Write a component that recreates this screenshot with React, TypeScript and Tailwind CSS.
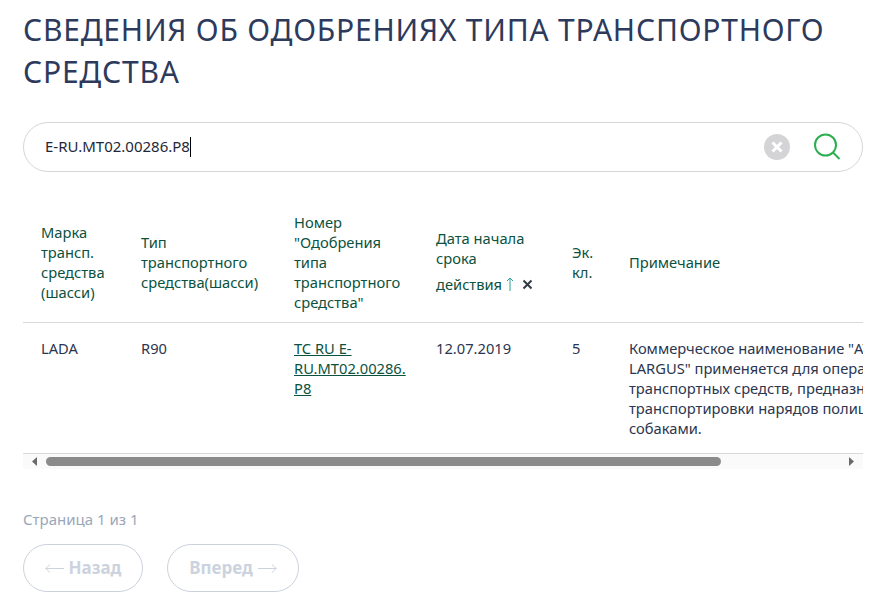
const font = "font-['Noto_Sans','Open_Sans',sans-serif]";

function Th({ children, className = "" }: { children: React.ReactNode; className?: string }) {
  return <th className={"pl-[18px] pr-2 py-[10px] text-left align-middle font-normal text-[14.7px] leading-[20px] text-[#0b5240] " + className}>{children}</th>;
}
function Td({ children, className = "" }: { children: React.ReactNode; className?: string }) {
  return <td className={"pl-[18px] pr-2 pt-[15px] pb-[15px] align-top text-[14.7px] leading-[20px] text-[#2b3650] " + className}>{children}</td>;
}

function Arrow({ flip = false }: { flip?: boolean }) {
  return (
    <svg width="19" height="11" viewBox="0 0 19 11" className={flip ? "rotate-180" : ""}>
      <path d="M0.5 5.5H19M5 1.5L0.8 5.5 5 9.5" fill="none" stroke="#ccd3de" strokeWidth="1" />
    </svg>
  );
}

export default function App() {
  return (
    <div className={"w-[884px] h-[602px] overflow-hidden bg-white pl-[23px] pr-[21px] " + font}>
      <h1 className="pt-[9px] text-[30px] leading-[42px] tracking-[0.78px] font-normal text-[#2d3a5c]">
        СВЕДЕНИЯ ОБ ОДОБРЕНИЯХ ТИПА ТРАНСПОРТНОГО<br />СРЕДСТВА
      </h1>
      <div className="mt-[29px] flex h-[50px] items-center rounded-[25px] border border-[#d6d6d6] pl-[21px] pr-[20px]">
        <span className="flex-1 -translate-y-px text-[15px] text-[#1f2937]">
          E-RU.MT02.00286.P8<span className="inline-block h-[20px] w-px bg-black align-middle" />
        </span>
        <svg width="26" height="26" viewBox="0 0 26 26" className="mr-[24px]">
          <circle cx="13" cy="13" r="13" fill="#d4d4d6" />
          <path d="M8.5 8.5l9 9M17.5 8.5l-9 9" stroke="#fff" strokeWidth="3" />
        </svg>
        <svg width="28" height="28" viewBox="0 0 28 28">
          <circle cx="11.5" cy="12" r="10.5" fill="none" stroke="#2dae50" strokeWidth="2" />
          <path d="M19 19.5l6.5 6.5" stroke="#2dae50" strokeWidth="2" />
        </svg>
      </div>
      <div className="mt-[30px] overflow-hidden">
        <table className="w-[1000px] table-fixed border-collapse">
          <colgroup>
            <col className="w-[100px]" />
            <col className="w-[153px]" />
            <col className="w-[142px]" />
            <col className="w-[136px]" />
            <col className="w-[57px]" />
            <col />
          </colgroup>
          <thead>
            <tr className="border-b border-[#d9d9d9]">
              <Th>Марка<br />трансп.<br />средства<br />(шасси)</Th>
              <Th>Тип<br />транспортного<br />средства(шасси)</Th>
              <Th>Номер<br />"Одобрения<br />типа<br />транспортного<br />средства"</Th>
              <Th>
                Дата начала<br />срока<br />
                <span className="mt-[6px] mb-[2px] flex items-center">
                  действия
                  <svg width="10" height="16" viewBox="0 0 10 16" className="ml-[3px]">
                    <path d="M5 15V2M2 5l3-3 3 3" fill="none" stroke="#2aa198" strokeWidth="1" />
                  </svg>
                  <svg width="11" height="11" viewBox="0 0 11 11" className="ml-[7px]">
                    <path d="M1.5 1.5l8 8M9.5 1.5l-8 8" stroke="#333b45" strokeWidth="2" />
                  </svg>
                </span>
              </Th>
              <Th>Эк.<br />кл.</Th>
              <Th>Примечание</Th>
            </tr>
          </thead>
          <tbody>
            <tr className="border-b border-[#d9d9d9]">
              <Td>LADA</Td>
              <Td>R90</Td>
              <Td>
                <a className="underline text-[#0b5240]">TC RU E-<br />RU.MT02.00286.<br />P8</a>
              </Td>
              <Td>12.07.2019</Td>
              <Td>5</Td>
              <Td>
                <span className="whitespace-nowrap">
                  Коммерческое наименование "ATLAS<br />
                  LARGUS" применяется для операторов<br />
                  транспортных средств, предназначенных для<br />
                  транспортировки нарядов полиции со служебными<br />
                  собаками.
                </span>
              </Td>
            </tr>
          </tbody>
        </table>
      </div>
      <div className="flex h-[15px] items-center bg-[#fafafa]">
        <svg width="23" height="15" viewBox="0 0 23 15" className="shrink-0">
          <path d="M9 7.5L14 3v9z" fill="#6b6b6b" />
        </svg>
        <div className="h-[9px] w-[675px] rounded-full bg-[#8b8b8b]" />
        <div className="flex-1" />
        <svg width="19" height="15" viewBox="0 0 19 15" className="shrink-0">
          <path d="M10 7.5L5 3v9z" fill="#6b6b6b" />
        </svg>
      </div>
      <p className="mt-[40px] text-[15px] leading-[20px] text-[#9aa7ba]">Страница 1 из 1</p>
      <div className="mt-[15px] flex gap-[24px]">
        <button className="flex h-[48px] w-[120px] items-center justify-center gap-[5px] rounded-[24px] border border-[#ccd2dc] text-[17px] font-bold text-[#ccd3de]">
          <Arrow /> Назад
        </button>
        <button className="flex h-[48px] w-[132px] items-center justify-center gap-[5px] rounded-[24px] border border-[#ccd2dc] text-[17px] font-bold text-[#ccd3de]">
          Вперед <Arrow flip />
        </button>
      </div>
    </div>
  );
}
